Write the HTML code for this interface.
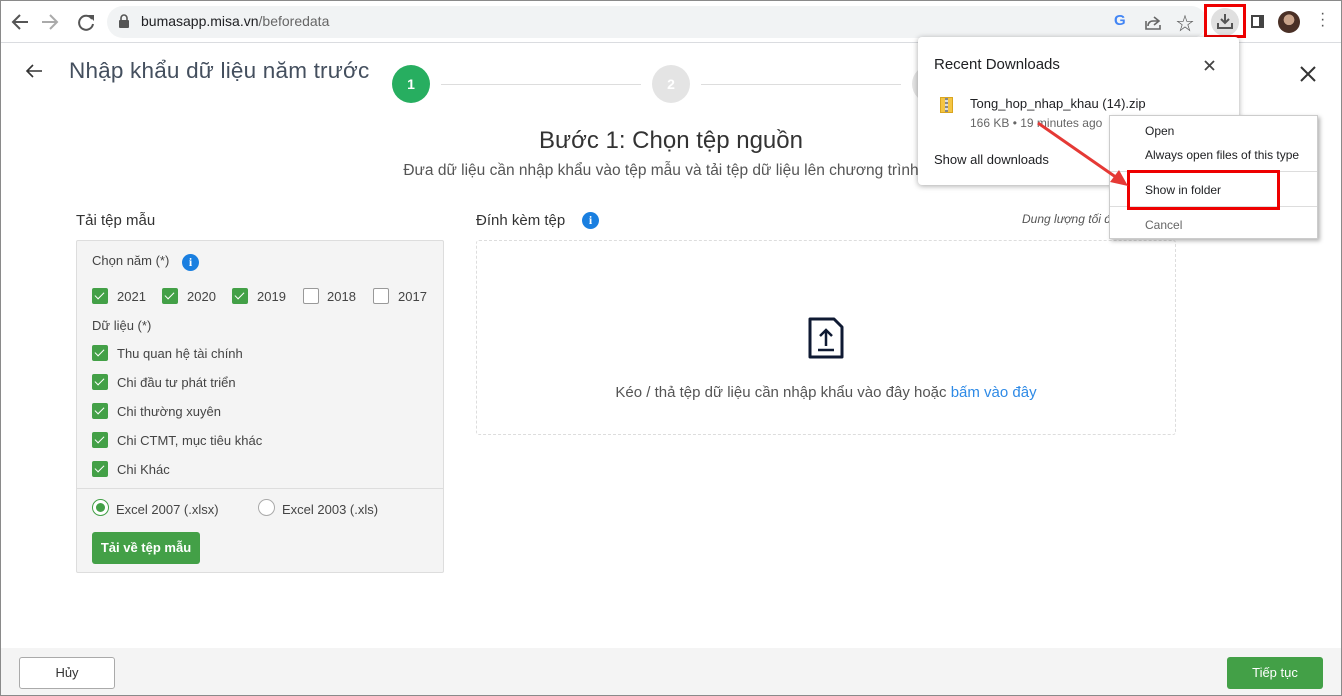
<!DOCTYPE html>
<html><head><meta charset="utf-8"><style>
*{box-sizing:border-box;margin:0;padding:0}
body{width:1342px;height:696px;position:relative;overflow:hidden;background:#fff;font-family:"Liberation Sans","Noto Sans CJK SC",sans-serif;color:#333}
.a{position:absolute}
.cb{position:absolute;width:16px;height:16px;border-radius:2px;background:#43a047}
.cb:after{content:"";position:absolute;left:5px;top:2px;width:4px;height:8px;border:solid #fff;border-width:0 1.5px 1.5px 0;transform:rotate(45deg)}
.ucb{position:absolute;width:16px;height:16px;border-radius:2px;border:1px solid #999;background:#fff}
.t13{font-size:13px;color:#444}
.info{position:absolute;width:17px;height:17px;border-radius:50%;background:#1a7fe0;color:#fff;font-size:12px;font-weight:bold;text-align:center;line-height:17px;font-family:"Liberation Serif",serif}
</style></head><body>
<!-- browser bar -->
<div class="a" style="left:0;top:0;width:1342px;height:43px;border-bottom:1px solid #dadce0;background:#fff"></div>
<svg class="a" style="left:10px;top:11px" width="90" height="22" viewBox="0 0 90 22"><path d="M18 11H4M10 4L3 11l7 7" stroke="#555" stroke-width="2" fill="none"/><path d="M32 11h14M40 4l7 7-7 7" stroke="#aaa" stroke-width="2" fill="none"/><path d="M82 8a7 7 0 1 0 1 5" stroke="#555" stroke-width="2" fill="none"/><path d="M78 4h6v6z" fill="#555"/></svg>
<div class="a" style="left:107px;top:6px;width:1100px;height:32px;border-radius:16px;background:#f1f3f4"></div>
<svg class="a" style="left:118px;top:14px" width="12" height="14"><rect x="1" y="6" width="10" height="8" rx="1" fill="#555"/><path d="M3 6V4a3 3 0 0 1 6 0v2" stroke="#555" stroke-width="1.6" fill="none"/></svg>
<div class="a" style="left:141px;top:13px;font-size:14px;color:#202124">bumasapp.misa.vn<span style="color:#666">/beforedata</span></div>
<div class="a" style="left:1114px;top:12px;font-size:15px;font-weight:bold;color:#4285f4">G</div>
<svg class="a" style="left:1144px;top:13px" width="18" height="18"><path d="M2 8v8h14v-4M10 4l5 4-5 4M15 8H9c-3 0-5 2-5 5" stroke="#666" stroke-width="1.6" fill="none"/></svg>
<div class="a" style="left:1176px;top:10px;font-size:18px;color:#555">☆</div>
<div class="a" style="left:1211px;top:8px;width:28px;height:28px;border-radius:50%;background:#e0e0e0"></div>
<svg class="a" style="left:1216px;top:12px" width="18" height="18"><path d="M9 2v9M5 7l4 4 4-4M2 11v5h14v-5" stroke="#555" stroke-width="2" fill="none"/></svg>
<div class="a" style="left:1204px;top:4px;width:42px;height:34px;border:3px solid #e00"></div>
<div class="a" style="left:1251px;top:15px;width:13px;height:13px;border:2px solid #444;border-right-width:5px"></div>
<div class="a" style="left:1278px;top:11px;width:22px;height:22px;border-radius:50%;background:radial-gradient(circle at 50% 40%,#c9a38a 0 30%,#4a3026 32%)"></div>
<div class="a" style="left:1320px;top:11px;font-size:16px;color:#555;line-height:6px">·<br>·<br>·</div>

<!-- header -->
<svg class="a" style="left:25px;top:64px" width="18" height="14"><path d="M17 7H2M8 1L2 7l6 6" stroke="#333" stroke-width="1.6" fill="none"/></svg>
<div class="a" style="left:69px;top:58px;font-size:22.5px;letter-spacing:0.2px;color:#444f5e">Nhập khẩu dữ liệu năm trước</div>
<div class="a" style="left:392px;top:65px;width:38px;height:38px;border-radius:50%;background:#27ae60;color:#fff;font-weight:bold;font-size:14px;text-align:center;line-height:38px">1</div>
<div class="a" style="left:441px;top:84px;width:200px;height:1px;background:#ddd"></div>
<div class="a" style="left:652px;top:65px;width:38px;height:38px;border-radius:50%;background:#e4e4e4;color:#fff;font-weight:bold;font-size:14px;text-align:center;line-height:38px">2</div>
<div class="a" style="left:701px;top:84px;width:200px;height:1px;background:#ddd"></div>
<div class="a" style="left:912px;top:65px;width:38px;height:38px;border-radius:50%;background:#e4e4e4"></div>
<svg class="a" style="left:1300px;top:66px" width="16" height="16"><path d="M1 1l14 14M15 1L1 15" stroke="#333" stroke-width="2"/></svg>
<div class="a" style="left:0;top:127px;width:1342px;text-align:center;font-size:24px;color:#333">Bước 1: Chọn tệp nguồn</div>
<div class="a" style="left:-10px;top:162px;width:1342px;text-align:center;font-size:15.5px;color:#555">Đưa dữ liệu cần nhập khẩu vào tệp mẫu và tải tệp dữ liệu lên chương trình</div>

<!-- left panel -->
<div class="a" style="left:76px;top:212px;font-size:15px;color:#333">Tải tệp mẫu</div>
<div class="a" style="left:76px;top:240px;width:368px;height:333px;background:#f4f4f4;border:1px solid #ddd;border-radius:2px"></div>
<div class="a" style="left:76px;top:488px;width:368px;height:1px;background:#ddd"></div>
<div class="a t13" style="left:92px;top:253px">Chọn năm (*)</div>
<div class="info" style="left:182px;top:254px">i</div>
<div class="cb" style="left:92px;top:288px"></div><div class="a t13" style="left:117px;top:289px">2021</div>
<div class="cb" style="left:162px;top:288px"></div><div class="a t13" style="left:187px;top:289px">2020</div>
<div class="cb" style="left:232px;top:288px"></div><div class="a t13" style="left:257px;top:289px">2019</div>
<div class="ucb" style="left:303px;top:288px"></div><div class="a t13" style="left:327px;top:289px">2018</div>
<div class="ucb" style="left:373px;top:288px"></div><div class="a t13" style="left:398px;top:289px">2017</div>
<div class="a t13" style="left:92px;top:318px">Dữ liệu (*)</div>
<div class="cb" style="left:92px;top:345px"></div><div class="a t13" style="left:117px;top:346px">Thu quan hệ tài chính</div>
<div class="cb" style="left:92px;top:374px"></div><div class="a t13" style="left:117px;top:375px">Chi đầu tư phát triển</div>
<div class="cb" style="left:92px;top:403px"></div><div class="a t13" style="left:117px;top:404px">Chi thường xuyên</div>
<div class="cb" style="left:92px;top:432px"></div><div class="a t13" style="left:117px;top:433px">Chi CTMT, mục tiêu khác</div>
<div class="cb" style="left:92px;top:461px"></div><div class="a t13" style="left:117px;top:462px">Chi Khác</div>
<div class="a" style="left:92px;top:499px;width:17px;height:17px;border-radius:50%;border:1px solid #43a047;background:#fff"></div>
<div class="a" style="left:96px;top:503px;width:9px;height:9px;border-radius:50%;background:#43a047"></div>
<div class="a t13" style="left:116px;top:502px">Excel 2007 (.xlsx)</div>
<div class="a" style="left:258px;top:499px;width:17px;height:17px;border-radius:50%;border:1px solid #aaa;background:#fff"></div>
<div class="a t13" style="left:282px;top:502px">Excel 2003 (.xls)</div>
<div class="a" style="left:92px;top:532px;width:108px;height:32px;border-radius:3px;background:#43a047;color:#fff;font-size:13px;font-weight:bold;text-align:center;line-height:32px">Tải về tệp mẫu</div>

<!-- right -->
<div class="a" style="left:476px;top:212px;font-size:15px;color:#333">Đính kèm tệp</div>
<div class="info" style="left:582px;top:212px">i</div>
<div class="a" style="left:1022px;top:212px;font-size:12px;font-style:italic;color:#555">Dung lượng tối đa</div>
<div class="a" style="left:476px;top:240px;width:700px;height:195px;border:1px dashed #ddd;border-radius:3px"></div>
<svg class="a" style="left:807px;top:316px" width="38" height="44"><path d="M3 3h24l8 8v30H3z" stroke="#0f1a33" stroke-width="3" fill="none" stroke-linejoin="round"/><path d="M19 30V15M13 20l6-6 6 6M11 34h16" stroke="#0f1a33" stroke-width="2.5" fill="none"/></svg>
<div class="a" style="left:0;top:384px;width:1652px;text-align:center;font-size:15px;color:#555">Kéo / thả tệp dữ liệu cần nhập khẩu vào đây hoặc <span style="color:#2e8ae6">bấm vào đây</span></div>

<!-- footer -->
<div class="a" style="left:0;top:648px;width:1342px;height:48px;background:#f4f4f4"></div>
<div class="a" style="left:19px;top:657px;width:96px;height:32px;border:1px solid #aaa;border-radius:3px;background:#fff;text-align:center;line-height:30px;font-size:13px;color:#333">Hủy</div>
<div class="a" style="left:1227px;top:657px;width:96px;height:32px;border-radius:3px;background:#43a047;color:#fff;text-align:center;line-height:32px;font-size:13px">Tiếp tục</div>

<!-- downloads popup -->
<div class="a" style="left:918px;top:37px;width:321px;height:148px;background:#fff;border-radius:4px;box-shadow:0 1px 6px rgba(0,0,0,.35)"></div>
<div class="a" style="left:934px;top:56px;font-size:15px;color:#202124">Recent Downloads</div>
<svg class="a" style="left:1204px;top:60px" width="11" height="11"><path d="M1 1l9 9M10 1L1 10" stroke="#444" stroke-width="1.8"/></svg>
<div class="a" style="left:940px;top:97px;width:13px;height:16px;background:#f5c542;border:1px solid #d9a520"></div>
<div class="a" style="left:945px;top:98px;width:3px;height:14px;background:repeating-linear-gradient(#888 0 2px,#ddd 2px 4px)"></div>
<div class="a" style="left:970px;top:96px;font-size:13px;color:#202124">Tong_hop_nhap_khau (14).zip</div>
<div class="a" style="left:970px;top:116px;font-size:12px;color:#666">166 KB • 19 minutes ago</div>
<div class="a" style="left:934px;top:152px;font-size:13px;color:#202124">Show all downloads</div>

<!-- context menu -->
<div class="a" style="left:1109px;top:115px;width:209px;height:124px;background:#fff;border:1px solid #ccc;box-shadow:2px 2px 4px rgba(0,0,0,.3)"></div>
<div class="a" style="left:1145px;top:124px;font-size:12px;color:#202124">Open</div>
<div class="a" style="left:1145px;top:148px;font-size:12px;color:#202124">Always open files of this type</div>
<div class="a" style="left:1110px;top:171px;width:207px;height:1px;background:#ddd"></div>
<div class="a" style="left:1145px;top:183px;font-size:12px;color:#202124">Show in folder</div>
<div class="a" style="left:1110px;top:206px;width:207px;height:1px;background:#ddd"></div>
<div class="a" style="left:1145px;top:218px;font-size:12px;color:#666">Cancel</div>
<div class="a" style="left:1127px;top:170px;width:153px;height:40px;border:3px solid #e00"></div>
<svg class="a" style="left:1030px;top:118px" width="110" height="80"><path d="M8 5L90 62" stroke="#e53935" stroke-width="3"/><path d="M98 68L80 64l9-12z" fill="#e53935"/></svg>
<div class="a" style="left:0;top:0;width:1342px;height:696px;border:1px solid #8a8a8a;pointer-events:none"></div>
</body></html>
